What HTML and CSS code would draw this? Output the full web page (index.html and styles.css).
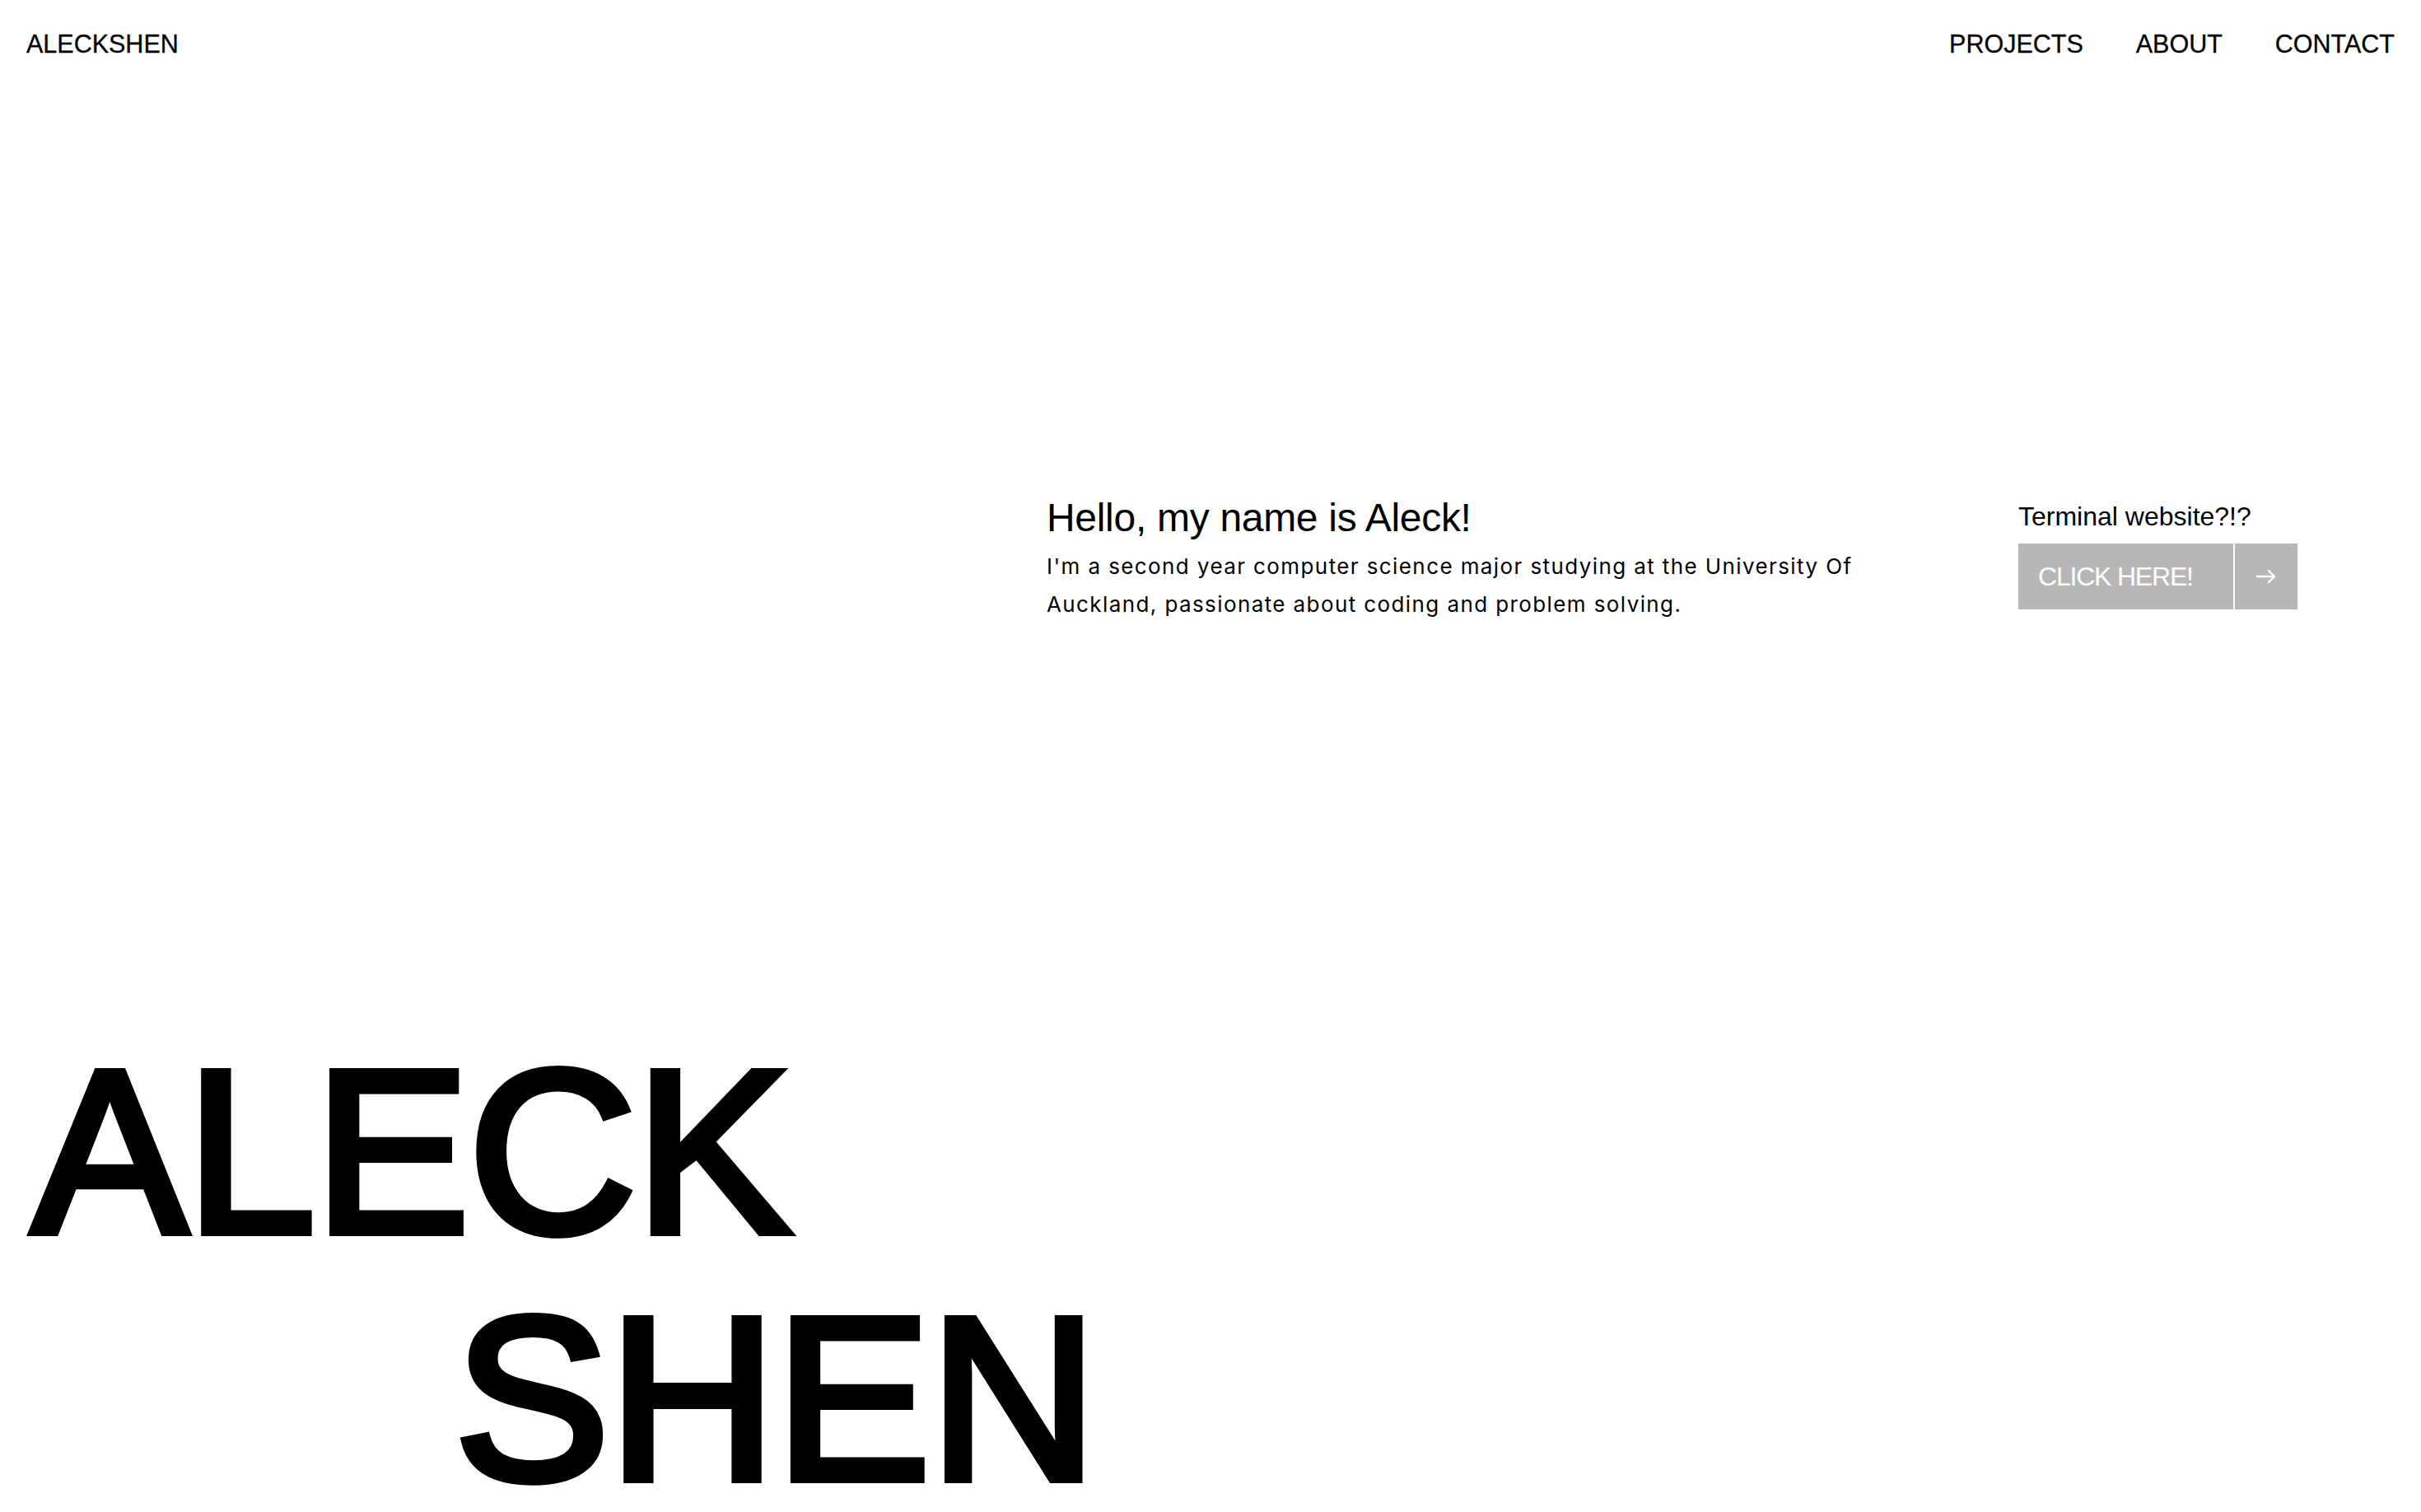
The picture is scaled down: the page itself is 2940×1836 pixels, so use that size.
FILE: index.html
```html
<!DOCTYPE html>
<html lang="en">
<head>
<meta charset="utf-8">
<title>Aleck Shen</title>
<link rel="stylesheet" href="styles.css">
</head>
<body>
<header class="site-header">
  <a class="brand" href="#">ALECKSHEN</a>
  <nav class="nav">
    <a class="nav-link" href="#">PROJECTS</a>
    <a class="nav-link" href="#">ABOUT</a>
    <a class="nav-link" href="#">CONTACT</a>
  </nav>
</header>
<main class="page">
  <section class="hero">
    <div class="intro">
      <h1 class="intro-title">Hello, my name is Aleck!</h1>
      <p class="intro-text">I'm a second year computer science major studying at the University Of Auckland, passionate about coding and problem solving.</p>
    </div>
    <div class="terminal">
      <p class="terminal-label">Terminal website?!?</p>
      <a class="terminal-btn" href="#">
        <span class="btn-text">CLICK HERE!</span>
        <span class="btn-arrow">
          <svg width="26" height="18" viewBox="0 0 26 18" fill="none" stroke="#ffffff" stroke-width="2.4" stroke-linecap="round" stroke-linejoin="round"><path d="M2 9H23"/><path d="M16 2L23 9L16 16"/></svg>
        </span>
      </a>
    </div>
  </section>
  <section class="name">
    <div class="name-line">ALECK</div>
    <div class="name-line name-line-indent">SHEN</div>
  </section>
</main>
</body>
</html>
```

FILE: styles.css
```css
html, body {
  margin: 0;
  padding: 0;
  background: #ffffff;
  color: #000000;
}

body {
  font-family: "Liberation Sans", Arial, sans-serif;
  overflow: hidden;
}

a {
  color: inherit;
  text-decoration: none;
}

.site-header {
  display: flex;
  justify-content: space-between;
  align-items: center;
  padding: 35px 32px 0 32px;
  font-size: 30.5px;
  line-height: 36px;
  -webkit-text-stroke: 0.3px #000000;
}

.nav {
  display: flex;
  gap: 64px;
}

.hero {
  display: flex;
  align-items: flex-start;
  gap: 140px;
  margin-top: 529px;
  padding-left: 1271px;
}

.intro {
  width: 1040px;
}

.intro-title {
  margin: 0 0 7px 0;
  font-weight: 400;
  font-size: 48px;
  line-height: 1.2;
  letter-spacing: -0.3px;
}

.intro-text {
  margin: 0;
  font-family: Inter, "Liberation Sans", sans-serif;
  font-size: 26px;
  line-height: 46px;
  letter-spacing: 1.4px;
}

.terminal {
  margin-top: 8px;
  display: flex;
  flex-direction: column;
}

.terminal-label {
  margin: 0 0 14px 0;
  font-size: 32px;
  line-height: 1.2;
}

.terminal-btn {
  display: flex;
  gap: 2px;
  height: 80px;
}

.btn-text {
  display: flex;
  align-items: center;
  width: 261px;
  box-sizing: border-box;
  padding-left: 24px;
  background: #b7b7b7;
  color: #ffffff;
  font-size: 32px;
  letter-spacing: -1.2px;
}

.btn-arrow {
  display: flex;
  align-items: center;
  justify-content: center;
  width: 76px;
  background: #b7b7b7;
}

.name {
  display: flex;
  flex-direction: column;
  gap: 40px;
  margin-top: 512px;
  padding-left: 39px;
  font-size: 282px;
  line-height: 260px;
  letter-spacing: -1px;
  -webkit-text-stroke: 10px #000000;
}

.name-line-indent {
  padding-left: 513px;
}
```
